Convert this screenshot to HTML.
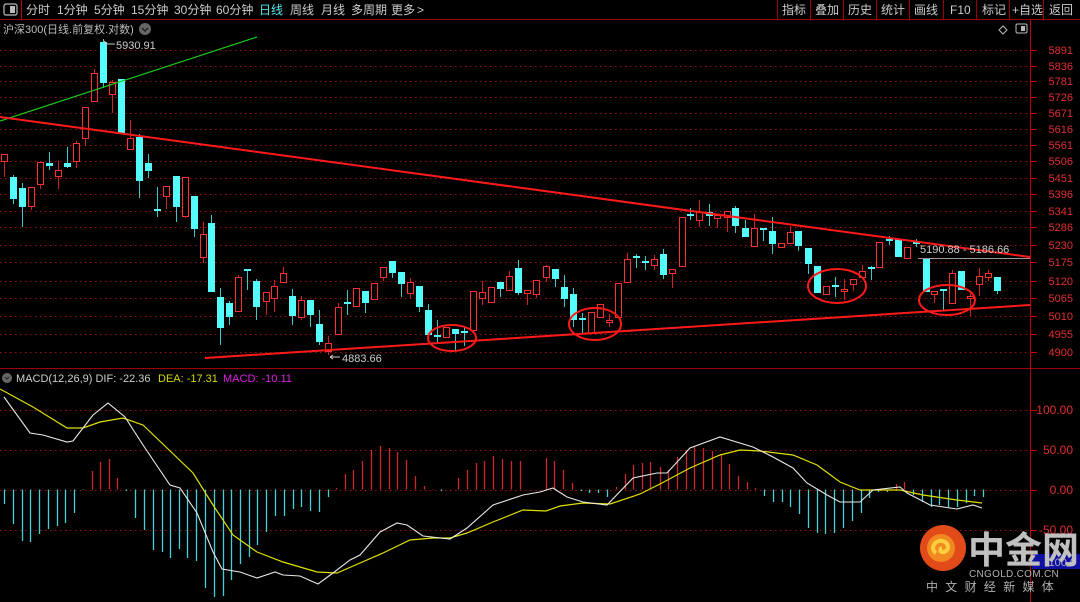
<!DOCTYPE html>
<html><head><meta charset="utf-8"><style>
html,body{margin:0;padding:0;background:#000;width:1080px;height:602px;overflow:hidden;font-family:"Liberation Sans","Noto Sans CJK SC",sans-serif;}
#c{position:absolute;left:0;top:0}
</style></head><body>
<svg id="c" width="1080" height="602" viewBox="0 0 1080 602" xmlns="http://www.w3.org/2000/svg" font-family="Liberation Sans, Noto Sans CJK SC, sans-serif">
<rect width="1080" height="602" fill="#000"/>
<line x1="0" y1="19.5" x2="1080" y2="19.5" stroke="#a00000"/>
<line x1="21.5" y1="0" x2="21.5" y2="19" stroke="#c00000"/>
<rect x="4" y="4" width="13" height="11" rx="2" fill="none" stroke="#bbb" stroke-width="1.2"/><rect x="10" y="6" width="5" height="7" fill="#bbb"/>
<g font-size="12" fill="#ccc">
<text x="26" y="14">分时</text><text x="57" y="14">1分钟</text><text x="94" y="14">5分钟</text><text x="131" y="14">15分钟</text><text x="174" y="14">30分钟</text><text x="216" y="14">60分钟</text>
<text x="259" y="14" fill="#54e8f0">日线</text><text x="290" y="14">周线</text><text x="321" y="14">月线</text><text x="351" y="14">多周期</text><text x="391" y="14">更多</text><text x="417" y="14">&gt;</text>
<text x="782" y="14">指标</text><text x="815" y="14">叠加</text><text x="848" y="14">历史</text><text x="881" y="14">统计</text><text x="914" y="14">画线</text><text x="950" y="14">F10</text><text x="982" y="14">标记</text><text x="1012" y="14">+自选</text><text x="1049" y="14">返回</text>
</g>
<g stroke="#a00000"><line x1="777.5" y1="0" x2="777.5" y2="19"/><line x1="810.5" y1="0" x2="810.5" y2="19"/><line x1="843.5" y1="0" x2="843.5" y2="19"/><line x1="876.5" y1="0" x2="876.5" y2="19"/><line x1="909.5" y1="0" x2="909.5" y2="19"/><line x1="943.5" y1="0" x2="943.5" y2="19"/><line x1="976.5" y1="0" x2="976.5" y2="19"/><line x1="1009.5" y1="0" x2="1009.5" y2="19"/><line x1="1043.5" y1="0" x2="1043.5" y2="19"/></g>
<text x="3" y="33" font-size="11" fill="#bbb">沪深300(日线.前复权.对数)</text>
<circle cx="145" cy="29" r="6" fill="#666"/><path d="M142 28l3 3 3-3" stroke="#222" stroke-width="1.5" fill="none"/>
<path d="M1003 26l4 4-4 4-4-4z" fill="none" stroke="#bbb"/>
<rect x="1016" y="24" width="11" height="9" rx="1.5" fill="none" stroke="#bbb"/><rect x="1021" y="26" width="4" height="5" fill="#bbb"/>
<line x1="1030.5" y1="20" x2="1030.5" y2="602" stroke="#c00000"/>
<line x1="0" y1="368.5" x2="1080" y2="368.5" stroke="#a00000"/>
<g id="grid"></g>
<g id="candles"></g>
<line x1="0" y1="121" x2="257" y2="37" stroke="#18c818" stroke-width="1.2"/>
<line x1="0" y1="117" x2="1030" y2="257" stroke="#ff1a1a" stroke-width="2"/>
<line x1="205" y1="358" x2="1030" y2="305" stroke="#ff1a1a" stroke-width="2"/>
<g fill="none" stroke="#ff1a1a" stroke-width="2">
<ellipse cx="452" cy="338" rx="24" ry="13"/><ellipse cx="595" cy="324" rx="26" ry="16"/><ellipse cx="837" cy="286" rx="29" ry="17"/><ellipse cx="947" cy="300" rx="28" ry="15"/>
</g>
<text x="116" y="49" font-size="11" fill="#ccc">5930.91</text><path d="M104 41l3 3h8" stroke="#ccc" fill="none"/>
<text x="342" y="362" font-size="11" fill="#ccc">4883.66</text><path d="M330 357h10M330 357l3-2M330 357l3 2" stroke="#ccc" fill="none"/>
<text x="920" y="253" font-size="11" fill="#ccc">5190.88 - 5186.66</text>
<line x1="918" y1="258.5" x2="1030" y2="258.5" stroke="#999"/>
<circle cx="7" cy="378" r="5" fill="#666"/><path d="M5 377l2 2 2-2" stroke="#222" fill="none"/>
<text x="16" y="382" font-size="11" fill="#ccc">MACD(12,26,9)  DIF: -22.36</text>
<text x="158" y="382" font-size="11" fill="#d8d800">DEA: -17.31</text>
<text x="223" y="382" font-size="11" fill="#e020e0">MACD: -10.11</text>
<g id="hist"></g>
<polyline fill="none" stroke="#e0e000" stroke-width="1.2" points="0,389 33,407 67,428 83,428 100,422 123,418 143,425 167,448 193,473 213,505 233,535 257,552 283,562 317,572 337,573 360,563 383,553 410,540 433,538 450,538 467,533 493,522 523,510 546,511 560,506 583,503 610,504 640,494 660,484 690,468 720,455 740,450 760,451 793,455 817,465 840,482 860,490 900,490 923,495 957,500 982,503"/>
<polyline fill="none" stroke="#e8e8e8" stroke-width="1.1" points="4,397 30,433 43,435 67,442 73,441 93,415 108,403 125,417 143,445 170,485 180,488 197,513 213,552 222,569 240,572 257,578 275,572 283,575 300,576 318,584 333,573 350,560 360,555 380,532 397,523 407,525 423,536 450,539 467,528 493,505 523,495 540,492 553,488 567,497 583,502 607,505 633,478 657,473 667,473 690,448 720,437 753,447 773,457 793,468 807,483 827,495 840,502 860,502 873,490 900,487 907,493 930,505 957,509 973,505 982,508"/>
<g font-size="12" fill="#e03030" text-anchor="end">
<text x="1073" y="414">100.00</text><text x="1073" y="454">50.00</text><text x="1073" y="494">0.00</text><text x="1073" y="534">-50.00</text>
</g>
<g stroke="#c00000"><line x1="1031" y1="410.5" x2="1037" y2="410.5"/><line x1="1031" y1="450.5" x2="1037" y2="450.5"/><line x1="1031" y1="490.5" x2="1037" y2="490.5"/><line x1="1031" y1="530.5" x2="1037" y2="530.5"/></g>
<rect x="1032" y="554" width="48" height="15" fill="#1010a0"/>
<text x="1076" y="566" font-size="11" fill="#aac" text-anchor="end">-100.0</text>
<circle cx="943" cy="548" r="23" fill="#e24a1a"/>
<circle cx="941" cy="548" r="14" fill="#f08a20"/>
<path d="M936 553c-6-4-2-13 6-12 7 1 8 9 2 11-4 1-5-3-2-4" stroke="#fbd040" stroke-width="4" fill="none"/>
<text x="968" y="563" font-size="37" font-weight="bold" fill="#c0c0c0" font-family="Noto Sans CJK SC, sans-serif">中金网</text>
<text x="969" y="577" font-size="10" fill="#b0b0b0" letter-spacing="0.3">CNGOLD.COM.CN</text>
<text x="926" y="591" font-size="12" fill="#b0b0b0" letter-spacing="7.3">中文财经新媒体</text>
</svg>
<script>
var NS="http://www.w3.org/2000/svg";
function el(p,t,a){var e=document.createElementNS(NS,t);for(var k in a)e.setAttribute(k,a[k]);p.appendChild(e);return e;}
var g=document.getElementById('grid');
var lv=[[5891,50],[5836,66],[5781,81],[5726,97],[5671,113],[5616,129],[5561,145],[5506,161],[5451,178],[5396,194],[5341,211],[5286,227],[5230,245],[5175,262],[5120,281],[5065,298],[5010,316],[4955,334],[4900,352]];
lv.forEach(function(l){el(g,'line',{x1:0,y1:l[1]+.5,x2:1030,y2:l[1]+.5,stroke:'#a01010','stroke-dasharray':'1.5,3.5'});
el(g,'line',{x1:1031,y1:l[1]+.5,x2:1037,y2:l[1]+.5,stroke:'#c00000'});
var t=el(g,'text',{x:1073,y:l[1]+4,'font-size':11,fill:'#e03030','text-anchor':'end'});t.textContent=l[0];});
[410,450,490,530].forEach(function(y){el(g,'line',{x1:0,y1:y+.5,x2:1030,y2:y+.5,stroke:'#a01010','stroke-dasharray':'1.5,3.5'});});
var C=[[4,154,161,154,177,'r'],[13,177,199,175,204,'c'],[22,188,207,183,227,'c'],[31,187,206,187,210,'r'],[40,162,184,162,189,'r'],[49,163,166,152,170,'c'],[58,170,176,161,189,'r'],[67,163,167,147,168,'c'],[76,143,161,141,168,'r'],[85,107,138,107,146,'r'],[94,73,101,69,101,'r'],[103,42,83,39,88,'c'],[112,82,94,80,113,'r'],[121,79,133,79,133,'c'],[130,138,149,120,149,'r'],[139,137,181,134,198,'c'],[148,163,171,154,178,'c'],[157,209,210,187,217,'c'],[166,186,196,186,209,'r'],[176,176,207,176,222,'c'],[185,177,216,177,218,'r'],[194,196,229,196,237,'c'],[203,234,257,222,263,'r'],[211,223,292,215,292,'c'],[220,297,328,288,345,'c'],[229,303,317,301,325,'c'],[238,277,311,275,311,'r'],[247,269,271,269,290,'c'],[256,281,307,279,320,'c'],[266,292,301,292,315,'r'],[274,286,298,280,312,'r'],[283,273,282,267,282,'r'],[292,296,316,289,325,'c'],[301,300,317,296,320,'r'],[310,300,315,300,327,'c'],[319,324,342,310,345,'c'],[328,343,351,336,355,'r'],[338,307,334,303,334,'r'],[347,302,303,290,315,'c'],[356,288,306,288,306,'r'],[365,291,303,291,313,'c'],[374,283,299,283,299,'r'],[383,267,277,267,281,'r'],[392,261,273,261,278,'c'],[401,272,284,272,297,'c'],[410,282,293,278,298,'r'],[419,286,307,286,312,'c'],[428,310,335,304,341,'c'],[437,335,337,320,343,'c'],[446,327,337,327,337,'r'],[455,329,334,329,350,'c'],[464,331,333,326,346,'c'],[473,291,330,291,330,'r'],[482,292,298,281,305,'r'],[491,287,302,287,302,'r'],[500,282,289,282,297,'c'],[509,276,290,271,290,'r'],[518,268,293,260,295,'c'],[527,290,293,290,305,'r'],[536,280,294,280,298,'r'],[546,266,277,265,282,'r'],[555,269,279,269,287,'c'],[564,287,299,275,307,'c'],[573,294,320,288,327,'c'],[582,318,320,313,333,'c'],[591,312,333,312,333,'r'],[600,304,317,304,318,'r'],[609,320,322,314,327,'r'],[618,283,317,283,317,'r'],[627,259,282,253,282,'r'],[636,256,258,254,268,'c'],[645,261,263,256,270,'c'],[654,259,265,255,270,'r'],[663,254,275,249,279,'c'],[672,269,273,269,288,'r'],[682,217,266,217,266,'r'],[690,214,216,208,220,'c'],[699,212,220,200,227,'r'],[709,212,216,204,226,'c'],[717,215,218,215,228,'r'],[727,211,217,211,232,'r'],[735,208,226,206,233,'c'],[745,228,237,220,237,'c'],[754,228,246,214,246,'r'],[763,228,230,228,241,'c'],[772,231,244,217,254,'c'],[781,243,247,243,247,'r'],[790,232,243,226,243,'r'],[798,231,246,231,251,'c'],[808,248,264,248,274,'c'],[817,266,293,266,293,'c'],[826,286,294,286,294,'r'],[835,285,287,277,297,'c'],[844,289,291,279,300,'r'],[853,279,284,279,291,'r'],[862,271,277,265,277,'r'],[871,267,269,266,280,'c'],[879,242,267,242,267,'r'],[889,239,241,236,245,'c'],[898,239,257,239,257,'c'],[907,247,258,247,258,'r'],[916,242,244,239,247,'c'],[926,259,292,259,292,'c'],[934,291,294,291,303,'r'],[943,289,291,289,310,'c'],[952,273,303,270,303,'r'],[961,271,290,271,290,'c'],[970,296,298,291,316,'r'],[979,276,284,268,296,'r'],[988,273,277,270,281,'r'],[997,277,291,277,294,'c']];
var cg=document.getElementById('candles');
C.forEach(function(c){var col=c[5]=='r'?'#ff3030':'#54fcfc';
el(cg,'line',{x1:c[0]+.5,y1:c[3],x2:c[0]+.5,y2:c[4],stroke:c[5]=='r'?'#d02020':'#3cc8c8'});
var h=Math.max(c[2]-c[1],1);
if(c[5]=='r')el(cg,'rect',{x:c[0]-2.5,y:c[1]+.5,width:6,height:h,fill:'#000',stroke:col});
else el(cg,'rect',{x:c[0]-3,y:c[1],width:7,height:Math.max(h,2),fill:col});});
var H=[[4,504],[13,524],[22,541],[30,542],[39,534],[48,529],[57,526],[65,523],[74,513],[83,490],[92,471],[100,462],[109,459],[117,478],[126,491],[135,518],[144,530],[153,550],[162,552],[170,558],[179,549],[187,558],[196,561],[205,588],[214,597],[223,596],[231,580],[240,564],[249,557],[257,545],[266,532],[275,516],[284,516],[293,509],[301,507],[310,511],[319,512],[328,497],[336,488],[345,474],[353,470],[362,461],[371,450],[380,446],[389,448],[397,452],[406,460],[415,476],[424,486],[433,489],[441,491],[450,489],[458,478],[467,470],[476,463],[484,461],[493,456],[502,459],[511,461],[520,461],[546,458],[554,461],[563,470],[572,483],[581,491],[589,493],[598,493],[607,497],[616,487],[625,474],[633,465],[642,463],[650,462],[660,467],[668,470],[677,457],[686,450],[694,447],[703,448],[712,451],[721,455],[729,464],[738,476],[747,482],[755,488],[764,496],[773,502],[782,502],[790,507],[799,514],[808,528],[817,533],[825,534],[834,533],[843,528],[852,521],[861,513],[869,498],[878,492],[887,492],[896,484],[904,482],[913,495],[922,502],[931,507],[939,505],[948,507],[957,507],[966,503],[974,496],[983,497]];
var hg=document.getElementById('hist');
H.forEach(function(b){var up=b[1]<489.5;el(hg,'line',{x1:b[0]+.5,y1:489.5,x2:b[0]+.5,y2:b[1],stroke:up?'#d02828':'#40d0d8','stroke-width':1.3});});
</script>
</body></html>
